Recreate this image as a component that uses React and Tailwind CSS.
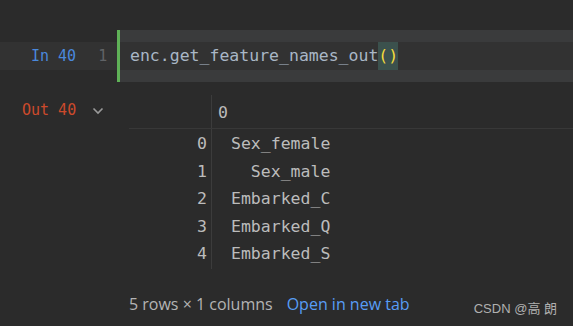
import React from "react";

const mono = { fontFamily: '"DejaVu Sans Mono", "Liberation Mono", monospace' };
const sans = { fontFamily: '"Open Sans", "Noto Sans", "Noto Sans CJK SC", sans-serif' };

const rows = [
  ["0", "Sex_female"],
  ["1", "Sex_male"],
  ["2", "Embarked_C"],
  ["3", "Embarked_Q"],
  ["4", "Embarked_S"],
];

function Chevron() {
  return (
    <svg viewBox="0 0 12 8" className="h-[8px] w-[12px] text-[#9a9a9a]" fill="none" stroke="currentColor" strokeWidth="1.6">
      <path d="M1.5 1.5 6 6l4.5-4.5" />
    </svg>
  );
}

function CodeCell() {
  return (
    <div className="flex h-[52px]">
      <div className="flex w-[117px] flex-col">
        <div className="h-[12px]" />
        <div className="flex h-[28px] items-center bg-[#323232] text-[15px]" style={mono}>
          <span className="ml-[31px] text-[#4a88dc]">In 40</span>
          <span className="ml-[22px] text-[#606366]">1</span>
        </div>
        <div className="h-[12px]" />
      </div>
      <div className="w-[3px] bg-[#5fb157]" />
      <div className="flex flex-1 flex-col">
        <div className="h-[12px] bg-[#3a3b3c]" />
        <div className="flex h-[28px] items-center bg-[#323232] pl-[10px] text-[16.5px] text-[#a9b7c6]" style={mono}>
          <span>enc.get_feature_names_out</span>
          <span className="flex h-[28px] items-center bg-[#3b514d] text-[#f5dc3c]">()</span>
        </div>
        <div className="h-[12px] bg-[#3a3b3c]" />
      </div>
    </div>
  );
}

function OutputTable() {
  return (
    <div className="mt-[13px] flex flex-col text-[16.5px] text-[#bcbcbc]" style={mono}>
      <div className="flex h-[33px]">
        <div className="w-[82px]" />
        <div className="w-px bg-[#3c3c3c]" />
        <div className="flex items-center pl-[6px] pt-[4px]">0</div>
      </div>
      <div className="h-px bg-[#383838]" />
      <div className="flex pt-[2px] pb-[10px]">
        <div className="flex w-[82px] flex-col items-end pr-[4px]">
          {rows.map(([i]) => (
            <div key={i} className="flex h-[27.5px] items-center">{i}</div>
          ))}
        </div>
        <div className="-mt-[2px] w-px bg-[#3c3c3c]" />
        <div className="flex flex-col items-end pl-[19px]">
          {rows.map(([i, v]) => (
            <div key={i} className="flex h-[27.5px] items-center">{v}</div>
          ))}
        </div>
      </div>
    </div>
  );
}

export default function App() {
  return (
    <div className="relative h-[326px] w-[573px] overflow-hidden bg-[#2b2b2b] pt-[30px]">
      <CodeCell />
      <div className="flex">
        <div className="flex w-[129px] items-start pt-[19px]">
          <span className="ml-[22px] text-[15px] leading-[18px] text-[#cc4a2b]" style={mono}>Out 40</span>
          <span className="ml-[16px] mt-[6px]"><Chevron /></span>
        </div>
        <div className="flex-1">
          <OutputTable />
          <div className="mt-[13px] flex items-center gap-[14px] text-[16px]" style={sans}>
            <span className="text-[#b4b4b4]">5 rows × 1 columns</span>
            <span className="text-[#589df6]">Open in new tab</span>
          </div>
        </div>
      </div>
      <div className="absolute bottom-[8px] right-[16px] text-[13px] text-[#b0b0b0]" style={{ fontFamily: '"Liberation Sans", "Noto Sans CJK SC", sans-serif' }}>
        CSDN @高 朗
      </div>
    </div>
  );
}
